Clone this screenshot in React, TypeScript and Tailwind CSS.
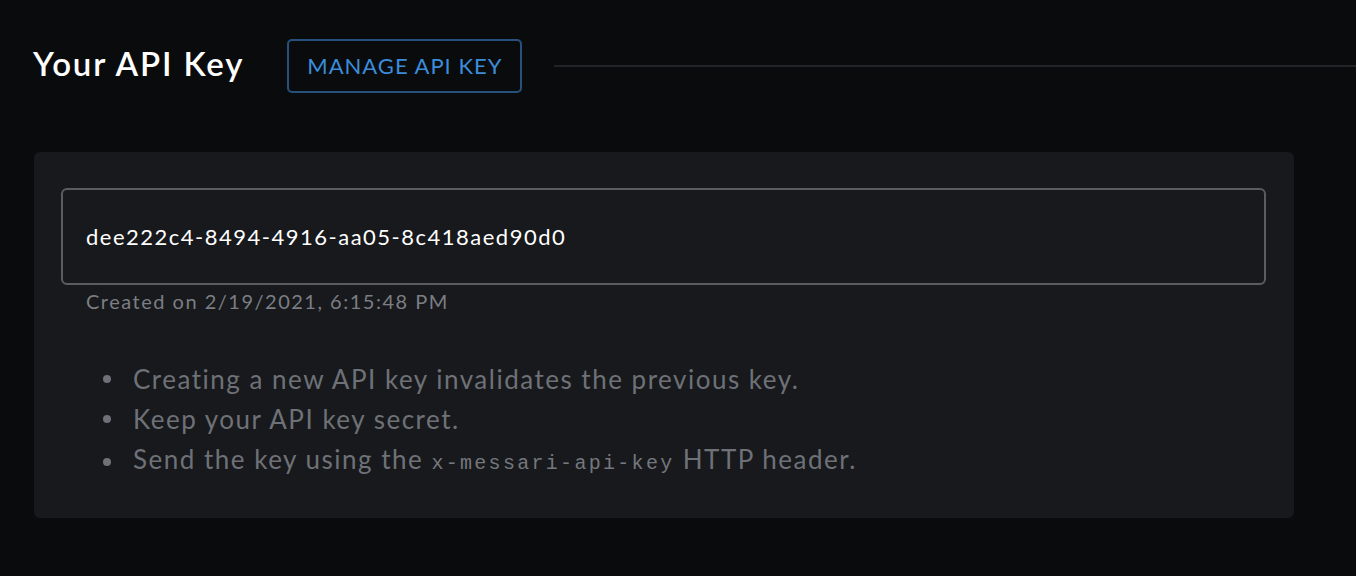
export default function App() {
  const bullets: React.ReactNode[] = [
    "Creating a new API key invalidates the previous key.",
    "Keep your API key secret.",
    <>
      Send the key using the{" "}
      <code className="font-['Liberation_Mono',monospace] text-[20px] tracking-[2.3px] text-[#74777d]">x-messari-api-key</code>{" "}
      HTTP header.
    </>,
  ];
  return (
    <div className="min-h-[576px] w-full bg-[#0a0b0d] font-['Lato',sans-serif] pt-[39px]">
      <div className="flex items-center h-[54px]">
        <h1 className="ml-[33px] mb-[5px] text-[33px] font-semibold text-white leading-none tracking-[1.85px]">Your API Key</h1>
        <button className="ml-[43px] h-[54px] w-[235px] rounded-[5px] border-2 border-[#27517c] text-[#3b8ddb] text-[22px] leading-none tracking-[1px]">
          MANAGE API KEY
        </button>
        <div className="ml-[32px] flex-1 h-[2px] bg-[#232427]" />
      </div>
      <div className="mt-[59px] ml-[34px] w-[1260px] h-[366px] rounded-[6px] bg-[#18191c] pt-[36px] px-[27px]">
        <div className="h-[97px] w-[1205px] rounded-[6px] border-2 border-[#5b5c60] flex items-center pl-[23px] text-white text-[22px] tracking-[1.5px]">
          dee222c4-8494-4916-aa05-8c418aed90d0
        </div>
        <div className="mt-[4px] pl-[25px] text-[20px] text-[#7b7e84] leading-[24px] tracking-[1.5px]">
          Created on 2/19/2021, 6:15:48 PM
        </div>
        <ul className="mt-[46px] flex flex-col text-[#6e7177] text-[26px] leading-[40px] tracking-[1.5px]">
          {bullets.map((b, i) => (
            <li key={i} className="flex items-center">
              <span className="ml-[42px] w-[8px] h-[8px] rounded-full bg-[#6e7177]" />
              <span className="ml-[22px]">{b}</span>
            </li>
          ))}
        </ul>
      </div>
    </div>
  );
}
